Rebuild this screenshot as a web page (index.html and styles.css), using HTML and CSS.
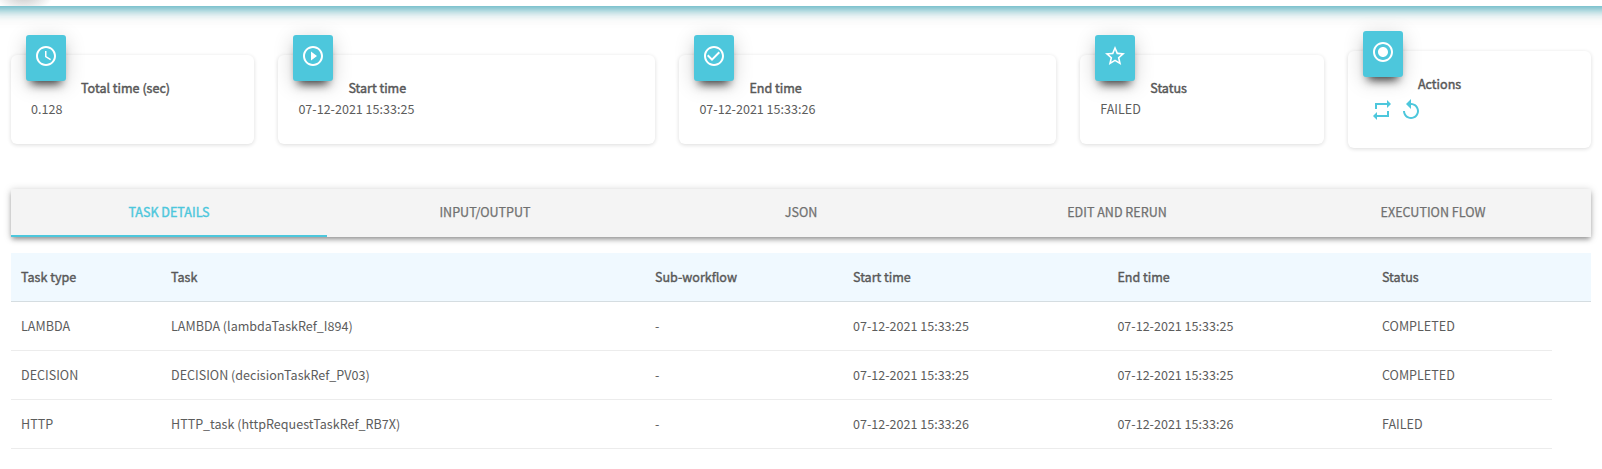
FILE: index.html
```html
<!DOCTYPE html>
<html lang="en">
<head>
<meta charset="utf-8">
<title>Workflow execution</title>
<link rel="stylesheet" href="styles.css">
</head>
<body>
<header class="topbar"><span class="topbar-logo"></span></header>
<main class="page">
  <section class="cards">
    <article class="card">
      <span class="card-icon"><svg viewBox="0 0 24 24"><path d="M11.99 2C6.47 2 2 6.48 2 12s4.47 10 9.99 10C17.52 22 22 17.52 22 12S17.52 2 11.99 2zM12 20c-4.42 0-8-3.58-8-8s3.58-8 8-8 8 3.58 8 8-3.58 8-8 8zm.5-13H11v6l5.25 3.15.75-1.23-4.5-2.67z"/></svg></span>
      <h2 class="card-title">Total time (sec)</h2>
      <p class="card-value">0.128</p>
    </article>
    <article class="card">
      <span class="card-icon"><svg viewBox="0 0 24 24"><path d="M10 16.5l6-4.5-6-4.500v9zM12 2C6.480 2 2 6.480 2 12s4.480 10 10 10 10-4.480 10-10S17.520 2 12 2zm0 18c-4.410 0-8-3.590-8-8s3.590-8 8-8 8 3.590 8 8-3.590 8-8 8z"/></svg></span>
      <h2 class="card-title">Start time</h2>
      <p class="card-value">07-12-2021 15:33:25</p>
    </article>
    <article class="card">
      <span class="card-icon"><svg viewBox="0 0 24 24"><path d="M16.590 7.580L10 14.170l-3.590-3.580L5 12l5 5 8-8zM12 2C6.480 2 2 6.480 2 12s4.480 10 10 10 10-4.480 10-10S17.520 2 12 2zm0 18c-4.420 0-8-3.580-8-8s3.580-8 8-8 8 3.580 8 8-3.580 8-8 8z"/></svg></span>
      <h2 class="card-title">End time</h2>
      <p class="card-value">07-12-2021 15:33:26</p>
    </article>
    <article class="card">
      <span class="card-icon"><svg viewBox="0 0 24 24"><path d="M22 9.240l-7.190-.620L12 2 9.190 8.630 2 9.240l5.460 4.730L5.820 21 12 17.270 18.180 21l-1.630-7.030L22 9.240zM12 15.400l-3.760 2.270 1-4.280-3.320-2.880 4.380-.380L12 6.100l1.710 4.040 4.380.380-3.320 2.880 1 4.280L12 15.400z"/></svg></span>
      <h2 class="card-title">Status</h2>
      <p class="card-value">FAILED</p>
    </article>
    <article class="card card-actions">
      <span class="card-icon"><svg viewBox="0 0 24 24"><path d="M12 7c-2.760 0-5 2.240-5 5s2.240 5 5 5 5-2.240 5-5-2.240-5-5-5zm0-5C6.480 2 2 6.480 2 12s4.480 10 10 10 10-4.480 10-10S17.520 2 12 2zm0 18c-4.420 0-8-3.580-8-8s3.580-8 8-8 8 3.580 8 8-3.580 8-8 8z"/></svg></span>
      <h2 class="card-title">Actions</h2>
      <div class="actions">
        <svg viewBox="0 0 24 24"><path d="M7 7h10v3l4-4-4-4v3H5v6h2V7zm10 10H7v-3l-4 4 4 4v-3h12v-6h-2v4z"/></svg>
        <svg viewBox="0 0 24 24"><path d="M12 5V1L7 6l5 5V7c3.310 0 6 2.690 6 6s-2.690 6-6 6-6-2.690-6-6H4c0 4.420 3.580 8 8 8s8-3.580 8-8-3.580-8-8-8z"/></svg>
      </div>
    </article>
  </section>

  <nav class="tabs">
    <a class="tab tab-active">TASK DETAILS</a>
    <a class="tab">INPUT/OUTPUT</a>
    <a class="tab">JSON</a>
    <a class="tab">EDIT AND RERUN</a>
    <a class="tab">EXECUTION FLOW</a>
  </nav>

  <section class="table">
    <div class="row row-head"><span>Task type</span><span>Task</span><span>Sub-workflow</span><span>Start time</span><span>End time</span><span>Status</span></div>
    <div class="row"><span>LAMBDA</span><span>LAMBDA (lambdaTaskRef_I894)</span><span>-</span><span>07-12-2021 15:33:25</span><span>07-12-2021 15:33:25</span><span>COMPLETED</span></div>
    <div class="row"><span>DECISION</span><span>DECISION (decisionTaskRef_PV03)</span><span>-</span><span>07-12-2021 15:33:25</span><span>07-12-2021 15:33:25</span><span>COMPLETED</span></div>
    <div class="row"><span>HTTP</span><span>HTTP_task (httpRequestTaskRef_RB7X)</span><span>-</span><span>07-12-2021 15:33:26</span><span>07-12-2021 15:33:26</span><span>FAILED</span></div>
  </section>
</main>
</body>
</html>
```
FILE: styles.css
```css
* { box-sizing: border-box; }
body {
  margin: 0;
  height: 469px;
  overflow: hidden;
  background: #fff;
  color: #5c5c5c;
  font-family: "Noto Sans CJK SC", "Noto Sans", sans-serif;
  font-size: 12.55px;
  line-height: 20px;
}
/* The bar is scrolled mostly out of view; only its lower edge shows. */
.topbar {
  display: flex;
  align-items: flex-end;
  height: 60px;
  margin: -54px -20px 0;
  padding-left: 20px;
  background: #fff;
  box-shadow: 0 4px 20px rgba(0, 0, 0, .12), 0 3px 11px rgba(0, 160, 185, .68);
}
.topbar-logo {
  width: 56px;
  height: 6px;
  background: radial-gradient(ellipse 30px 18px at 24px -6px, #c4c4c4, #fff);
}
.page { padding: 49px 11px 0; }
.cards {
  display: grid;
  grid-template-columns: 243.4px 377px 376.9px 243.7px 243px;
  column-gap: 24px;
  height: 134px;
  align-items: start;
}
.card {
  position: relative;
  height: 89px;
  padding: 23px 20px 0;
  border-radius: 6px;
  background: #fff;
  box-shadow: 0 1px 4px rgba(0, 0, 0, .14);
}
.card-icon {
  position: absolute;
  left: 15px;
  top: -20px;
  display: flex;
  justify-content: center;
  width: 40px;
  height: 46px;
  padding-top: 9.3px;
  border-radius: 3px;
  background: #4dc7dc;
  box-shadow: 0 4px 20px rgba(0, 0, 0, .18), 0 8px 10px -5px rgba(0, 0, 0, .75);
}
.card-icon svg { width: 24px; height: 24px; fill: #fff; }
.card-title {
  margin: 0;
  padding-left: 50px;
  font-size: 12.55px;
  font-weight: 400;
  line-height: 20px;
  -webkit-text-stroke: .45px #555;
}
.card-value { margin: 1px 0 0; }
.card-actions { height: 97px; margin-top: -4px; }
.actions { display: flex; gap: 5px; padding: 3.5px 0 0 2.3px; }
.actions svg { width: 24px; height: 24px; fill: #4dc7dc; }
.tabs {
  display: flex;
  height: 48px;
  background: #f4f4f4;
  box-shadow: 0 3px 5px -1px rgba(0, 0, 0, .36), 0 1px 8px rgba(0, 0, 0, .18);
}
.tab {
  flex: 1;
  text-align: center;
  line-height: 46px;
  color: #707070;
  -webkit-text-stroke: .25px currentColor;
}
.tab-active {
  color: #4dc7dc;
  border-bottom: 2px solid #4dc7dc;
  -webkit-text-stroke-width: .4px;
}
.table { margin-top: 16px; }
.row {
  display: grid;
  grid-template-columns: 150px 484px 198px 264.4px 264.6px 1fr;
  width: 1541px;
  height: 49px;
  padding-left: 10px;
  line-height: 48px;
  border-bottom: 1px solid #ececec;
}
.row-head {
  width: 1580px;
  background: #f0f9ff;
  border-bottom-color: #d5dde1;
  -webkit-text-stroke: .4px #555;
}
```
